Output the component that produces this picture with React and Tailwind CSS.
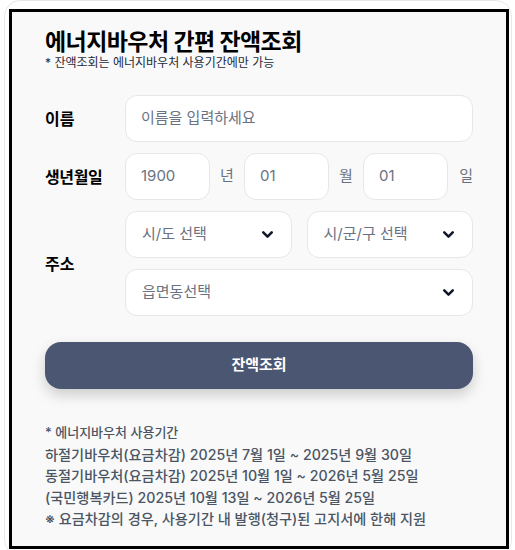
import { ChevronDown } from "lucide-react";

const font = "font-['Inter','Noto_Sans_CJK_KR',sans-serif]";

function Select({ label, className = "" }) {
  return (
    <div
      className={`h-[47px] flex items-center justify-between pl-4 pr-[15px] bg-white border border-gray-200 rounded-xl ${className}`}
    >
      <span className="text-[15px] text-gray-500">{label}</span>
      <ChevronDown size={17} strokeWidth={3.6} className="text-gray-900" />
    </div>
  );
}

function Box({ value }) {
  return (
    <div className="w-[85px] h-[47px] flex items-center pl-[15px] bg-white border border-gray-200 rounded-xl text-[15px] text-gray-500">
      {value}
    </div>
  );
}

export default function App() {
  return (
    <div className={`w-[515px] h-[550px] bg-white overflow-hidden ${font}`}>
      <div className="ml-[4px] w-[508px] h-[556px] pt-[8px] pl-[4px] border border-gray-200 rounded-2xl">
        <div className="w-[500px] h-[540px] border-[3px] border-black bg-[#f9f9f9] px-[33px] pt-[15px]">
          <h1 className="text-[23px] leading-[30px] font-bold tracking-tight text-black">
            에너지바우처 간편 잔액조회
          </h1>
          <p className="text-[12px] leading-[14px] text-gray-800 -mt-[1px]">
            * 잔액조회는 에너지바우처 사용기간에만 가능
          </p>

          <div className="mt-[25px] flex flex-col gap-[11px]">
            <div className="flex items-center">
              <span className="w-[80px] text-[16px] font-bold text-black">이름</span>
              <div className="flex-1 h-[47px] flex items-center pl-[15px] bg-white border border-gray-200 rounded-xl text-[15px] text-gray-500">
                이름을 입력하세요
              </div>
            </div>

            <div className="flex items-center">
              <span className="w-[80px] text-[16px] font-bold text-black tracking-tight">생년월일</span>
              <Box value="1900" />
              <span className="w-[34px] text-center text-[15px] text-gray-500">년</span>
              <Box value="01" />
              <span className="w-[34px] text-center text-[15px] text-gray-500">월</span>
              <Box value="01" />
              <span className="flex-1 text-right text-[15px] text-gray-500">일</span>
            </div>

            <div className="flex items-center">
              <span className="w-[80px] text-[16px] font-bold text-black">주소</span>
              <div className="flex-1 flex flex-col gap-[11px]">
                <div className="flex gap-[15px]">
                  <Select label="시/도 선택" className="flex-1" />
                  <Select label="시/군/구 선택" className="flex-1" />
                </div>
                <Select label="읍면동선택" />
              </div>
            </div>
          </div>

          <button className="mt-[26px] w-full h-[47px] rounded-2xl bg-[#4b5672] text-white text-[15px] font-bold shadow-[0_6px_14px_rgba(0,0,0,0.18)]">
            잔액조회
          </button>

          <div className="mt-[33px] text-[14.2px] leading-[21.5px] font-medium text-[#4b5563]">
            <p className="text-[13px]">* 에너지바우처 사용기간</p>
            <p>하절기바우처(요금차감) 2025년 7월 1일 ~ 2025년 9월 30일</p>
            <p>동절기바우처(요금차감) 2025년 10월 1일 ~ 2026년 5월 25일</p>
            <p>(국민행복카드) 2025년 10월 13일 ~ 2026년 5월 25일</p>
            <p>※ 요금차감의 경우, 사용기간 내 발행(청구)된 고지서에 한해 지원</p>
          </div>
        </div>
      </div>
    </div>
  );
}
